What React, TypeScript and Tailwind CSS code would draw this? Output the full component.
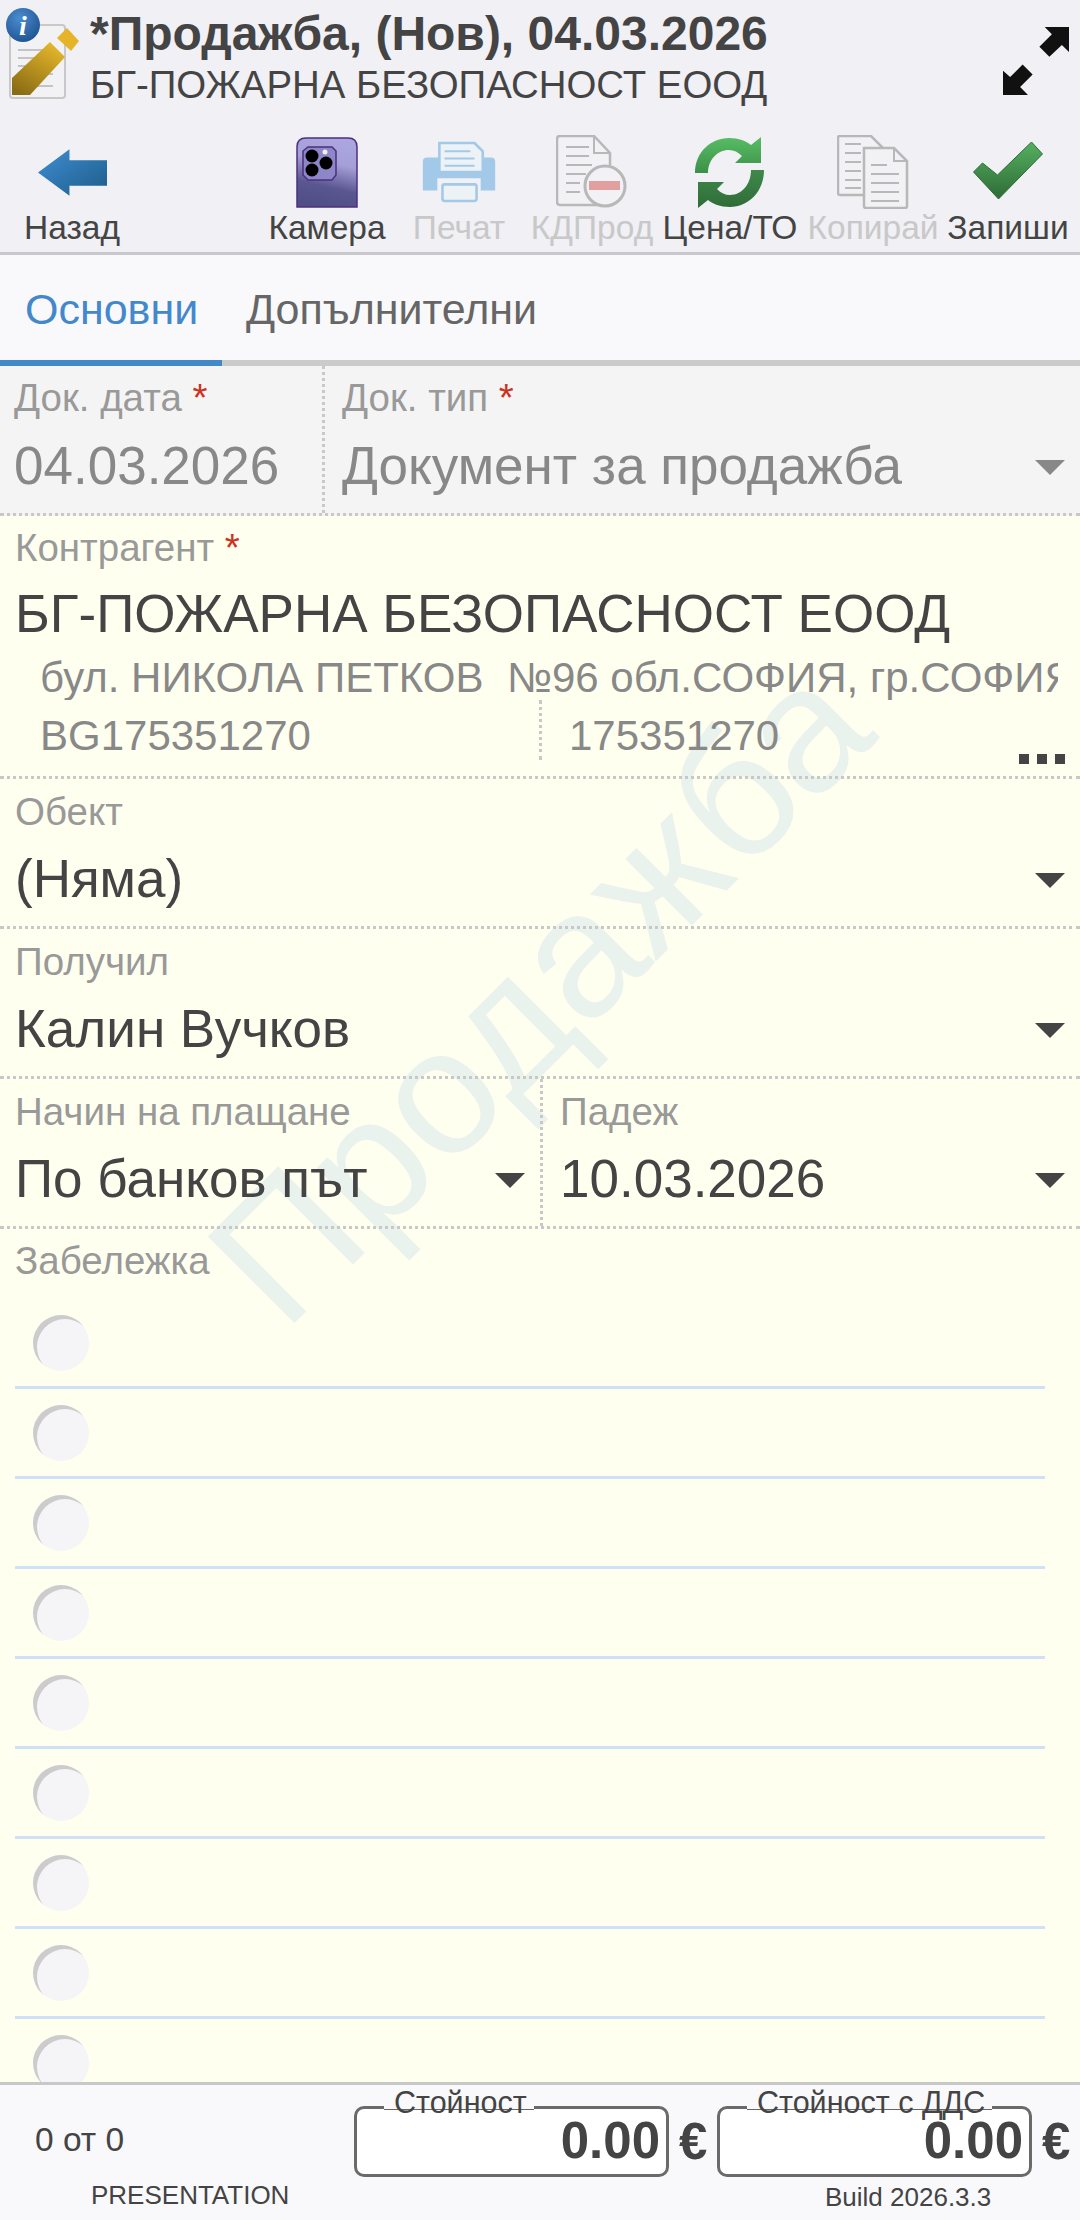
const sans = "font-['Liberation_Sans',Arial,sans-serif]";

function NoteIcon() {
  return (
    <svg width="80" height="100" viewBox="0 0 80 100" className="shrink-0">
      <defs>
        <linearGradient id="pen" x1="0.8" y1="0" x2="0.2" y2="1">
          <stop offset="0" stopColor="#e8b92c" />
          <stop offset="1" stopColor="#8a6c14" />
        </linearGradient>
        <radialGradient id="info" cx="0.4" cy="0.3" r="0.8">
          <stop offset="0" stopColor="#4a8cd0" />
          <stop offset="1" stopColor="#1c4f8c" />
        </radialGradient>
      </defs>
      <rect x="10" y="25" width="55" height="73" rx="3" fill="#f2f2f5" stroke="#c8c8c8" strokeWidth="2" />
      <path d="M18 50h35M18 58h35M18 66h35M18 74h35M18 86h35" stroke="#c4c4c4" strokeWidth="2" />
      <path d="M12 78 L12 95 L30 95 L65 57 L50 42 Z" fill="url(#pen)" />
      <path d="M57 38 L67 28 L79 41 L71 51 Z" fill="#e6b428" />
      <circle cx="23" cy="25" r="17" fill="url(#info)" />
      <text x="23" y="35" textAnchor="middle" fontFamily="Liberation Serif" fontStyle="italic" fontWeight="700" fontSize="28" fill="#fff">i</text>
    </svg>
  );
}

function Tool({ label, dim, children, className }: { label: string; dim?: boolean; children: React.ReactNode; className: string }) {
  return (
    <div className={`flex flex-col items-center ${className}`}>
      <div className="flex h-[76px] items-center justify-center">{children}</div>
      <span className={`text-[33.5px] leading-[36px] whitespace-nowrap ${dim ? "text-[#c8c8c8]" : "text-[#444]"}`}>{label}</span>
    </div>
  );
}

function Caret({ dim }: { dim?: boolean }) {
  return (
    <svg width="30" height="15" viewBox="0 0 30 15" className="mt-[3px] shrink-0">
      <path d="M0 0H30L15 15Z" fill={dim ? "#888" : "#444"} />
    </svg>
  );
}

function Req() {
  return <span className="text-[#cc3322]"> *</span>;
}

function Total({ label, gap, children }: { label: string; gap: string; children?: React.ReactNode }) {
  return (
    <div className="relative h-[110px] w-[363px] shrink-0 pt-[21px]">
      <div className="h-[71px] w-[315px] rounded-[10px] border-[3px] border-[#6a6a6a] bg-white pr-[6px] text-right text-[51px] leading-[64px] font-bold text-[#444]">0.00</div>
      <div className={`absolute left-[30px] top-[21px] h-[4px] border-b border-[#666] bg-[#f9f9fc] ${gap}`} />
      <span className="absolute left-[40px] top-0 text-[30.5px] leading-[34px] whitespace-nowrap text-[#444]">{label}</span>
      <span className="absolute left-[325px] top-[25px] text-[51px] leading-[64px] font-bold text-[#444]">€</span>
      {children}
    </div>
  );
}

export default function App() {
  return (
    <div className={`relative flex h-[2220px] w-[1080px] flex-col overflow-hidden bg-[#ffffef] ${sans}`}>
      {/* Header */}
      <div className="h-[255px] shrink-0 border-b-[3px] border-[#c8c8cc] bg-[#f0f0f5]">
        <div className="flex h-[112px]">
          <div className="h-[112px] w-[84px] shrink-0">
            <NoteIcon />
          </div>
          <div className="ml-[6px] flex-1 pt-[9px]">
            <div className="text-[48px] leading-[50px] font-bold whitespace-nowrap text-[#444]">*Продажба, (Нов), 04.03.2026</div>
            <div className="mt-[5px] text-[38.4px] leading-[42px] whitespace-nowrap text-[#444]">БГ-ПОЖАРНА БЕЗОПАСНОСТ ЕООД</div>
          </div>
          <svg width="66" height="68" viewBox="1345 85 185 190" className="mr-[11px] mt-[27px] shrink-0">
            <path d="M1530 85H1462L1482 105L1447 140L1475 168L1510 135L1530 155Z" fill="#111" />
            <path d="M1345 275H1415L1393 253L1428 218L1400 190L1365 225L1345 207Z" fill="#111" />
          </svg>
        </div>
        <div className="flex h-[140px] pt-[22px]">
          <Tool label="Назад" className="ml-[24px] w-[96px]">
            <svg width="69" height="47" viewBox="0 0 68 46">
              <defs>
                <linearGradient id="back" x1="0" y1="0" x2="1" y2="1">
                  <stop offset="0" stopColor="#3f8ed4" />
                  <stop offset="1" stopColor="#1d5c88" />
                </linearGradient>
              </defs>
              <path d="M0 23L31 0V11H68V36H31V46Z" fill="url(#back)" />
            </svg>
          </Tool>
          <Tool label="Камера" className="ml-[149px] w-[116px]">
            <svg width="62" height="72" viewBox="0 0 62 70">
              <defs>
                <linearGradient id="phone" x1="0.6" y1="0" x2="0.4" y2="1">
                  <stop offset="0" stopColor="#aca6e0" />
                  <stop offset="0.35" stopColor="#a49fd6" />
                  <stop offset="0.7" stopColor="#5a5690" />
                  <stop offset="1" stopColor="#4f4e86" />
                </linearGradient>
              </defs>
              <path d="M1 70V10Q1 1 10 1H52Q61 1 61 10V70Z" fill="url(#phone)" stroke="#4d2f7e" strokeWidth="1.5" />
              <path d="M12 10H36L40 14V38L36 43H12L7 38V14Z" fill="#8d86c8" stroke="#4d2f7e" strokeWidth="1.5" />
              <circle cx="16" cy="19" r="6.5" fill="#000" />
              <circle cx="30" cy="26" r="6.5" fill="#000" />
              <circle cx="16" cy="33" r="6.5" fill="#000" />
              <circle cx="29" cy="15" r="2.5" fill="#eee" />
            </svg>
          </Tool>
          <Tool label="Печат" dim className="ml-[28px] w-[92px]">
            <svg width="74" height="62" viewBox="0 0 70 60">
              <path d="M4 16H66Q70 16 70 20V48H56V36H14V48H0V20Q0 16 4 16Z" fill="#a3c9e8" />
              <path d="M16 2H50L58 10V30H16Z" fill="#edf2f7" stroke="#a3c9e8" strokeWidth="2.5" />
              <path d="M21 10H46M21 17H50M21 24H50" stroke="#a3c9e8" strokeWidth="2" />
              <rect x="19" y="42" width="33" height="16" rx="2" fill="#edf2f7" stroke="#a3c9e8" strokeWidth="2.5" />
            </svg>
          </Tool>
          <Tool label="КДПрод" dim className="ml-[26px] w-[122px]">
            <svg width="72" height="74" viewBox="0 0 72 74">
              <path d="M4 1H38L54 18V70H4Q1 70 1 67V4Q1 1 4 1Z" fill="#f2f2f6" stroke="#b8b8b8" strokeWidth="2.5" />
              <path d="M38 1V18H54" fill="none" stroke="#b8b8b8" strokeWidth="2" />
              <path d="M10 12H33M10 21H33M10 30H36M10 39H30M10 48H24M10 57H24" stroke="#b8b8b8" strokeWidth="2" />
              <circle cx="49" cy="51" r="20" fill="#f2f2f6" stroke="#b8b8b8" strokeWidth="3" />
              <rect x="33" y="46" width="31" height="9" fill="#e29f9f" />
            </svg>
          </Tool>
          <Tool label="Цена/ТО" className="ml-[10px] w-[134px]">
            <svg width="70" height="72" viewBox="0 0 70 72">
              <defs>
                <linearGradient id="r1" x1="0" y1="0" x2="0" y2="1">
                  <stop offset="0" stopColor="#58bd64" />
                  <stop offset="1" stopColor="#3c9048" />
                </linearGradient>
                <linearGradient id="r2" x1="0" y1="0" x2="0" y2="1">
                  <stop offset="0" stopColor="#3f8a4a" />
                  <stop offset="1" stopColor="#2f6c38" />
                </linearGradient>
              </defs>
              <path d="M0 37C0 16 16 2 34 2C44 2 51 5 56 9L66 1V27H40L47 20C43 16 39 14 34 14C22 14 13 24 13 37Z" fill="url(#r1)" />
              <path d="M69 34C69 56 53 71 35 71C25 71 18 68 13 64L3 72V46H29L22 53C26 57 30 59 35 59C47 59 56 48 56 34Z" fill="url(#r2)" />
            </svg>
          </Tool>
          <Tool label="Копирай" dim className="ml-[10px] w-[132px]">
            <svg width="72" height="74" viewBox="0 0 72 74">
              <path d="M3 1H34L47 14V60H3Q1 60 1 58V3Q1 1 3 1Z" fill="#f2f2f6" stroke="#b8b8b8" strokeWidth="2.5" />
              <path d="M8 9H24M8 18H24M8 27H24M8 36H24M8 45H24M8 53H24" stroke="#b8b8b8" strokeWidth="2" />
              <path d="M27 13H57L70 26V71Q70 73 68 73H29Q27 73 27 71Z" fill="#f2f2f6" stroke="#b8b8b8" strokeWidth="2.5" />
              <path d="M57 13V26H70" fill="none" stroke="#b8b8b8" strokeWidth="2" />
              <path d="M34 30H50M34 39H62M34 48H62M34 57H62M34 66H62" stroke="#b8b8b8" strokeWidth="2" />
            </svg>
          </Tool>
          <Tool label="Запиши" className="ml-[9px] w-[120px]">
            <svg width="71" height="60" viewBox="0 0 70 60">
              <defs>
                <linearGradient id="chk" x1="0.5" y1="0" x2="0.5" y2="1">
                  <stop offset="0" stopColor="#55b060" />
                  <stop offset="1" stopColor="#2e6b36" />
                </linearGradient>
              </defs>
              <path d="M0 30L9 21L24 33L58 0L69 12L25 57Z" fill="url(#chk)" stroke="#2f6d38" strokeWidth="1" />
            </svg>
          </Tool>
        </div>
      </div>

      {/* Tabs */}
      <div className="h-[111px] shrink-0 border-b-[6px] border-[#cbcbcb] bg-[#f9f9fc]">
        <div className="flex h-[111px] text-[43px] leading-[46px]">
          <div className="h-[111px] w-[222px] border-b-[6px] border-[#4488cc] pl-[25px] pt-[31px] text-[#4488cc]">Основни</div>
          <div className="pl-[24px] pt-[31px] text-[#666]">Допълнителни</div>
        </div>
      </div>

      {/* Form */}
      <div className="relative flex flex-1 flex-col overflow-hidden">
        <div className="pointer-events-none absolute left-[304px] top-[809px] origin-bottom-left -rotate-[45deg] whitespace-nowrap text-[178px] leading-[178px] text-[#e9f2ec]">Продажба</div>

        <div className="relative flex h-[150px] shrink-0 border-b-[3px] border-dotted border-[#c8c8c8] bg-[#f4f4f4]">
          <div className="w-[325px] border-r-[3px] border-dotted border-[#c8c8c8] pl-[14px] pt-[13px]">
            <div className="text-[38.5px] leading-[38px] text-[#999]">Док. дата<Req /></div>
            <div className="mt-[22px] text-[53px] leading-[54px] text-[#888]">04.03.2026</div>
          </div>
          <div className="flex-1 pl-[17px] pt-[13px]">
            <div className="text-[38.5px] leading-[38px] text-[#999]">Док. тип<Req /></div>
            <div className="mt-[22px] flex items-center justify-between pr-[15px]">
              <div className="text-[53px] leading-[54px] text-[#888]">Документ за продажба</div>
              <Caret dim />
            </div>
          </div>
        </div>

        <div className="relative h-[263px] shrink-0 border-b-[3px] border-dotted border-[#c8c8c8] pl-[15px] pt-[13px]">
          <div className="text-[38.5px] leading-[38px] text-[#999]">Контрагент<Req /></div>
          <div className="mt-[18px] text-[53px] leading-[58px] whitespace-nowrap text-[#444]">БГ-ПОЖАРНА БЕЗОПАСНОСТ ЕООД</div>
          <div className="ml-[25px] mt-[13px] w-[1018px] overflow-hidden text-[42px] leading-[44px] whitespace-pre text-[#888]">бул. НИКОЛА ПЕТКОВ  №96 обл.СОФИЯ, гр.СОФИЯ</div>
          <div className="ml-[25px] flex h-[60px] text-[42px] leading-[42px] text-[#888]">
            <div className="w-[502px] border-r-[3px] border-dotted border-[#c8c8c8] pt-[15px]">BG175351270</div>
            <div className="pl-[27px] pt-[15px]">175351270</div>
          </div>
          <div className="absolute bottom-[12px] right-[15px] flex gap-[8px]">
            <div className="h-[10px] w-[10px] bg-[#444]" />
            <div className="h-[10px] w-[10px] bg-[#444]" />
            <div className="h-[10px] w-[10px] bg-[#444]" />
          </div>
        </div>

        <div className="relative flex h-[150px] shrink-0 flex-col border-b-[3px] border-dotted border-[#c8c8c8] pl-[15px] pt-[14px]">
          <div className="text-[38.5px] leading-[38px] text-[#999]">Обект</div>
          <div className="mt-[19px] flex items-center justify-between pr-[15px] text-[53px] leading-[58px] text-[#444]">
            <span>(Няма)</span>
            <Caret />
          </div>
        </div>

        <div className="relative flex h-[150px] shrink-0 flex-col border-b-[3px] border-dotted border-[#c8c8c8] pl-[15px] pt-[14px]">
          <div className="text-[38.5px] leading-[38px] text-[#999]">Получил</div>
          <div className="mt-[19px] flex items-center justify-between pr-[15px] text-[53px] leading-[58px] text-[#444]">
            <span>Калин Вучков</span>
            <Caret />
          </div>
        </div>

        <div className="relative flex h-[150px] shrink-0 border-b-[3px] border-dotted border-[#c8c8c8]">
          <div className="w-[543px] border-r-[3px] border-dotted border-[#c8c8c8] pl-[15px] pt-[14px]">
            <div className="text-[38.5px] leading-[38px] text-[#999]">Начин на плащане</div>
            <div className="mt-[19px] flex items-center justify-between pr-[15px] text-[53px] leading-[58px] text-[#444]">
              <span>По банков път</span>
              <Caret />
            </div>
          </div>
          <div className="flex-1 pl-[17px] pt-[14px]">
            <div className="text-[38.5px] leading-[38px] text-[#999]">Падеж</div>
            <div className="mt-[19px] flex items-center justify-between pr-[15px] text-[53px] leading-[58px] text-[#444]">
              <span>10.03.2026</span>
              <Caret />
            </div>
          </div>
        </div>

        <div className="relative flex-1 overflow-hidden pl-[15px] pt-[13px]">
          <div className="text-[38.5px] leading-[38px] text-[#999]">Забележка</div>
          <div className="mt-[19px] w-[1030px]">
            {[0, 1, 2, 3, 4, 5, 6, 7, 8].map((i) => (
              <div key={i} className="flex h-[90px] items-center border-b-[3px] border-[#d0e0f8] pl-[18px]">
                <div className="h-[56px] w-[56px] rounded-full bg-[#f5f5f7] shadow-[inset_4px_4px_0_#cccccc]" />
              </div>
            ))}
          </div>
        </div>
      </div>

      {/* Footer */}
      <div className="flex h-[138px] shrink-0 border-t-[3px] border-[#c8c8c8] bg-[#f9f9fc]">
        <div className="w-[354px] shrink-0 text-[#444]">
          <div className="pl-[35px] pt-[37px] text-[33.5px] leading-[36px]">0 от 0</div>
          <div className="pl-[91px] pt-[22px] text-[26px] leading-[30px]">PRESENTATION</div>
        </div>
        <Total label="Стойност" gap="w-[150px]" />
        <Total label="Стойност с ДДС" gap="w-[245px]">
          <div className="absolute left-[108px] top-[97px] text-[26px] leading-[30px] whitespace-nowrap text-[#444]">Build 2026.3.3</div>
        </Total>
      </div>
    </div>
  );
}
